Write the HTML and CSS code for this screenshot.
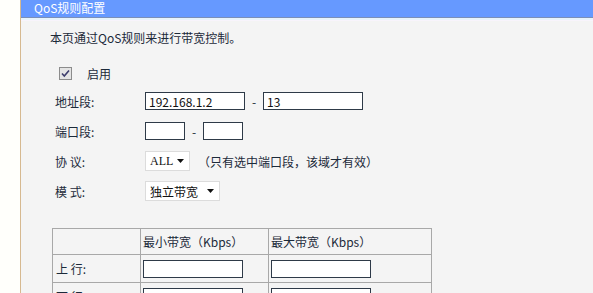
FILE: index.html
```
<!doctype html>
<html lang="zh-CN">
<head>
    <meta charset="UTF-8">
    <title>QoS规则配置</title>
    <link rel="stylesheet" href="styles.css">
</head>
<body>
<div id="panel">
    <div id="panel-title">QoS规则配置</div>

    <div id="panel-body">
        <div class="intro">本页通过QoS规则来进行带宽控制。</div>

        <div class="row row-check">
            <span class="check">
                <svg width="13" height="13" viewBox="0 0 13 13">
                    <rect x="0.5" y="0.5" width="12" height="12" fill="#e4e4e4" stroke="#8c8c8c"/>
                    <path d="M3 6.5 L5.3 9 L10 3.5" fill="none" stroke="#3c3c6c" stroke-width="1.6"/>
                </svg>
            </span>
            <span>启用</span>
        </div>

        <div class="row">
            <span class="label">地址段:</span>
            <input class="field field-ip" type="text" value="192.168.1.2">
            <span class="dash">-</span>
            <input class="field field-ip" type="text" value="13">
        </div>

        <div class="row">
            <span class="label">端口段:</span>
            <input class="field field-port" type="text">
            <span class="dash">-</span>
            <input class="field field-port" type="text">
        </div>

        <div class="row">
            <span class="label">协&nbsp;议:</span>
            <span class="select select-proto">ALL<svg class="caret" width="7" height="4" viewBox="0 0 7 4"><path d="M0 0 H7 L3.5 4 Z" fill="#111"/></svg></span>
            <span class="hint">（只有选中端口段，该域才有效）</span>
        </div>

        <div class="row">
            <span class="label">模&nbsp;式:</span>
            <span class="select select-mode">独立带宽<svg class="caret" width="7" height="4" viewBox="0 0 7 4"><path d="M0 0 H7 L3.5 4 Z" fill="#111"/></svg></span>
        </div>

        <table class="bw">
            <colgroup>
                <col class="col-label">
                <col class="col-min">
                <col class="col-max">
            </colgroup>
            <tr class="bw-head">
                <td></td>
                <td>最小带宽（Kbps）</td>
                <td>最大带宽（Kbps）</td>
            </tr>
            <tr>
                <td class="bw-label">上&nbsp;行:</td>
                <td><input class="field field-bw" type="text"></td>
                <td><input class="field field-bw" type="text"></td>
            </tr>
            <tr>
                <td class="bw-label">下&nbsp;行:</td>
                <td><input class="field field-bw" type="text" value="500"></td>
                <td><input class="field field-bw" type="text" value="4000"></td>
            </tr>
        </table>
    </div>
</div>
</body>
</html>
```

FILE: styles.css
```
body {
    margin: 0;
    background-color: #fffffb;
    font-family: "Noto Sans CJK SC", "DejaVu Sans", sans-serif;
    font-size: 12px;
    color: #1c2a3a;
}

#panel {
    margin-left: 20px;
    border-left: 1px solid #d6b990;
    background-color: #f4f4f4;
    height: 100vh;
    overflow: hidden;
}

#panel-title {
    height: 17px;
    line-height: 16px;
    padding-left: 13px;
    color: #fff;
    background-color: #6699ff;
    border-bottom: 1px solid #7a8fb8;
    box-shadow: 0 2px 0 #e8f4fc, 0 3px 0 #f8f4fc;
}

#panel-body {
    padding: 12px 0 0 29px;
}

.intro {
    height: 16px;
    line-height: 16px;
}

.row {
    display: flex;
    align-items: center;
    height: 30px;
}

.row-check {
    margin-top: 14px;
    height: 26px;
    padding-left: 9px;
}

.check {
    display: flex;
    margin-right: 15px;
}

.label {
    width: 95px;
    padding-left: 5px;
    box-sizing: border-box;
}

.field {
    box-sizing: border-box;
    height: 18px;
    border: 1px solid #2e3a48;
    background-color: #fff;
    font-family: "Noto Sans CJK SC", "DejaVu Sans", sans-serif;
    font-size: 12px;
    color: #111;
    padding: 0 3px;
    margin: 0;
    outline: none;
}

.field-ip {
    width: 100px;
}

.field-port {
    width: 40px;
}

.dash {
    width: 18px;
    text-align: center;
}

.select {
    display: inline-flex;
    align-items: center;
    box-sizing: border-box;
    height: 20px;
    background-color: #fff;
    border: 1px solid #dcdcdc;
    padding: 0 5px 0 4px;
    color: #111;
}

.caret {
    flex-shrink: 0;
    margin-left: auto;
}

.select-proto {
    width: 45px;
    font-family: "Liberation Serif", serif;
}

.select-mode {
    width: 75px;
}

.hint {
    margin-left: 8px;
}

.bw {
    margin: 22px 0 0 2px;
    border-collapse: collapse;
    table-layout: fixed;
    width: 379px;
}

.col-label {
    width: 88px;
}

.col-min {
    width: 128px;
}

.col-max {
    width: 163px;
}

.bw td {
    border: 1px solid #a8a8a8;
    padding: 0 2px;
    height: 25px;
}

.bw td.bw-label {
    padding-left: 3px;
}

.bw tr + tr td {
    height: 27px;
}

.field-bw {
    width: 100px;
    display: block;
}
```
